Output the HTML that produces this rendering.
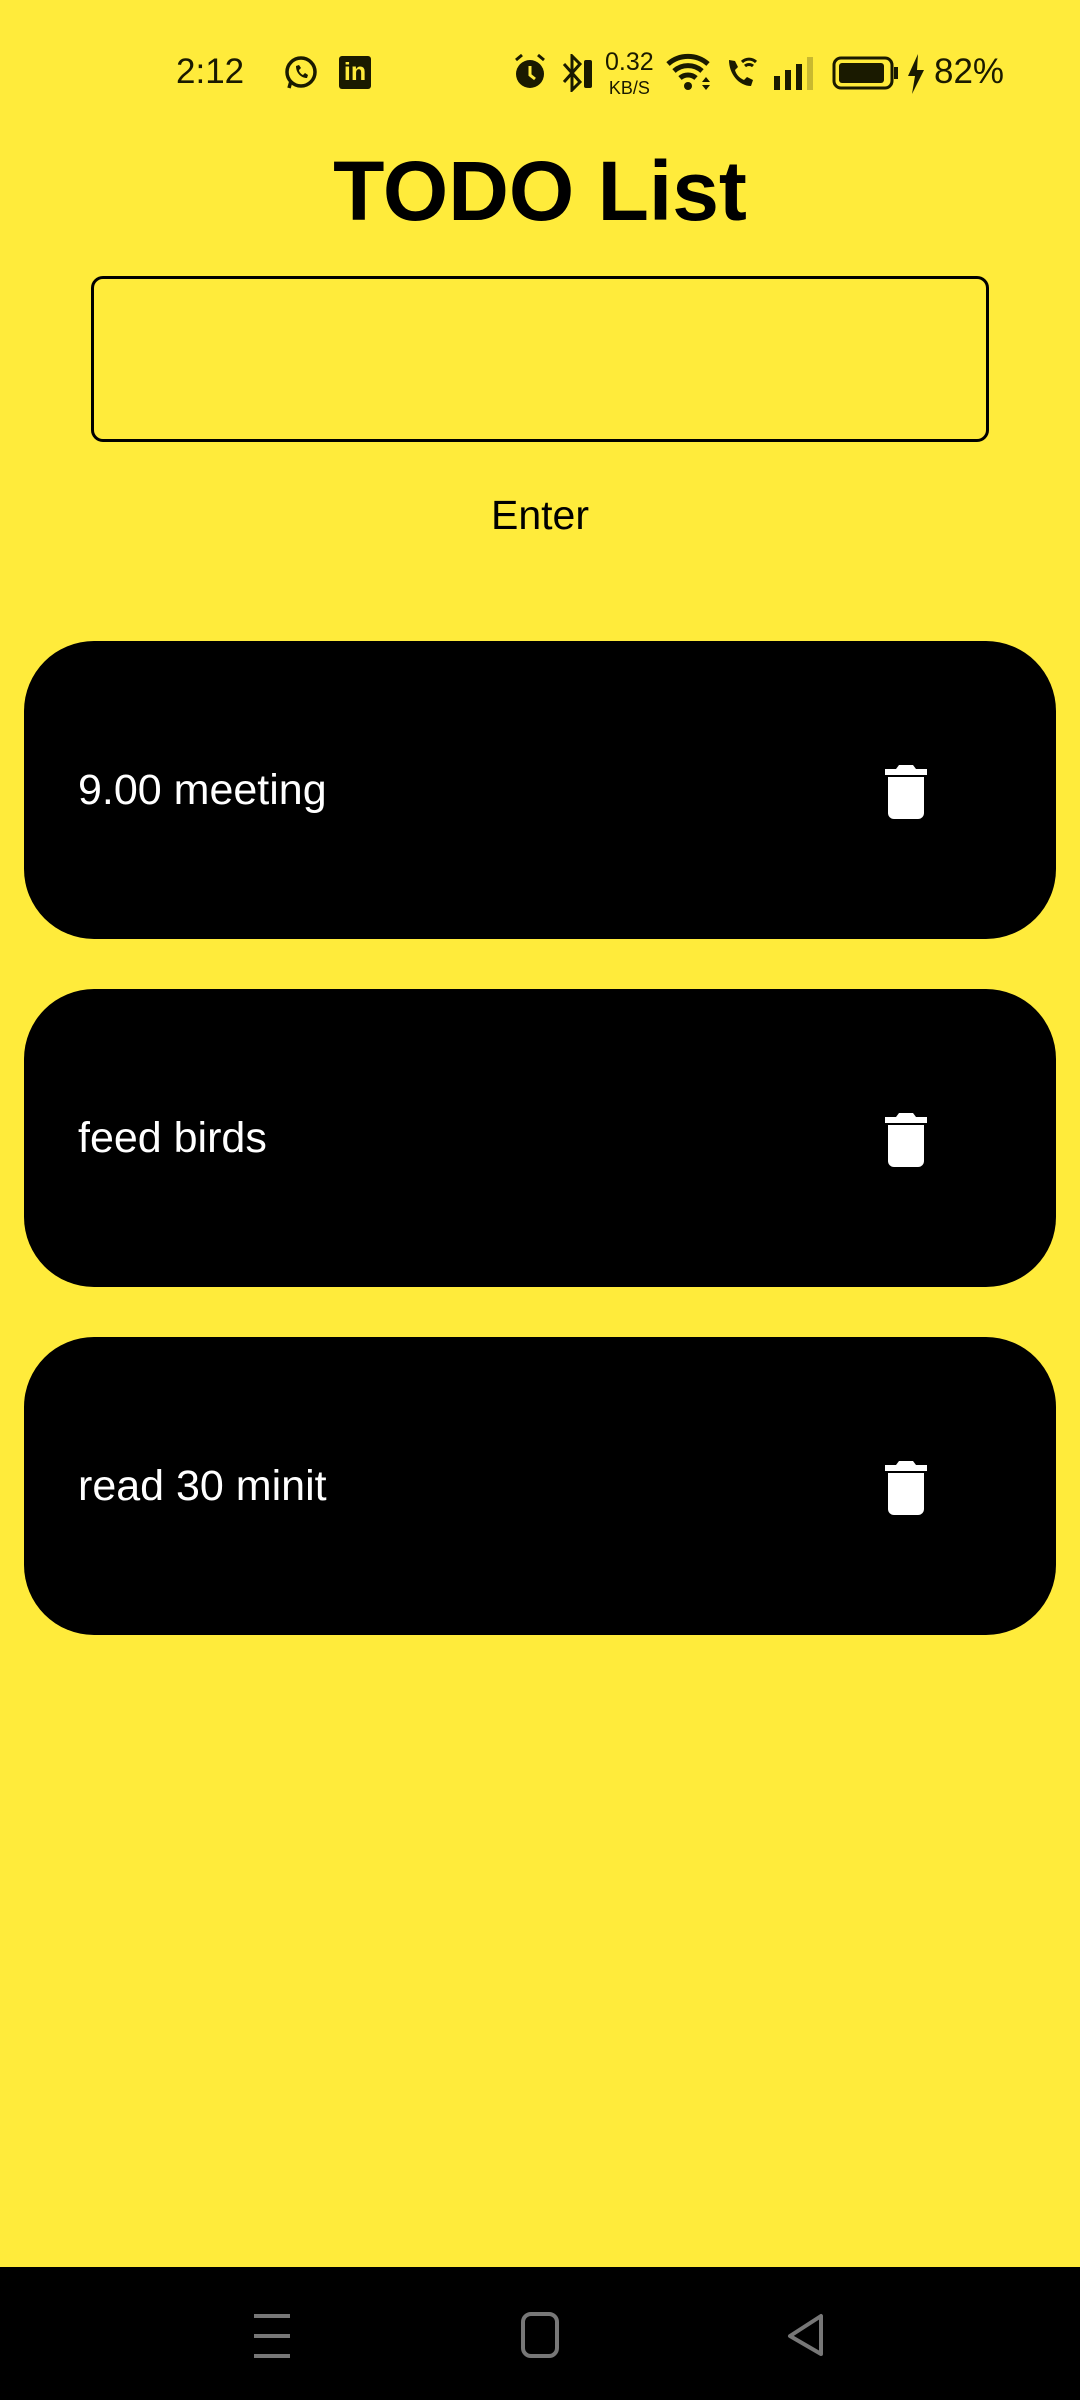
<!DOCTYPE html>
<html><head><meta charset="utf-8"><style>
*{margin:0;padding:0;box-sizing:border-box}
body{width:1080px;height:2400px;background:#FFEB3B;position:relative;overflow:hidden;font-family:"Liberation Sans",sans-serif;color:#000}
.abs{position:absolute}
.st{font-size:35px;color:#1a1a00;top:52px}
.title{left:0;width:1080px;text-align:center;top:136px;font-size:84px;font-weight:bold;line-height:110px}
.input{left:91px;top:276px;width:898px;height:166px;border:3px solid #000;border-radius:12px}
.enter{left:0;width:1080px;text-align:center;top:490px;font-size:41px;line-height:50px}
.card{left:24px;width:1032px;height:298px;background:#000;border-radius:70px}
.card span{position:absolute;left:54px;top:125px;font-size:43px;color:#fff;line-height:48px}
.card svg{position:absolute;left:861px;top:122px}
.nav{left:0;top:2267px;width:1080px;height:133px;background:#000}
</style></head><body>
<div class="abs st" style="left:176px">2:12</div>
<svg class="abs" style="left:283px;top:55px" width="36" height="36" viewBox="0 0 36 36"><circle cx="18" cy="17" r="14" fill="none" stroke="#1a1a00" stroke-width="3.5"/><path d="M6 33l2-7" stroke="#1a1a00" stroke-width="3.5"/><path d="M13 11c0 7 5 12 11 12l1-3-3-2-2 2c-2-1-4-3-4-5l2-2-2-3z" fill="#1a1a00"/></svg>
<div class="abs" style="left:339px;top:56px;width:32px;height:33px;background:#1a1a00;border-radius:3px;color:#FFEB3B;font-weight:bold;font-size:25px;line-height:33px;text-align:center">in</div>
<svg class="abs" style="left:512px;top:52px" width="36" height="40" viewBox="0 0 36 40"><circle cx="18" cy="22" r="14" fill="#1a1a00"/><path d="M18 14v9l5 4" stroke="#FFEB3B" stroke-width="3" fill="none"/><path d="M4 8l6-5M32 8l-6-5" stroke="#1a1a00" stroke-width="3"/></svg>
<svg class="abs" style="left:560px;top:54px" width="36" height="38" viewBox="0 0 36 38"><path d="M4 10l16 18-8 8V2l8 8L4 28" stroke="#1a1a00" stroke-width="3" fill="none"/><rect x="24" y="6" width="8" height="28" rx="2" fill="#1a1a00"/></svg>
<div class="abs" style="left:605px;top:50px;font-size:25px;line-height:24px;color:#1a1a00;text-align:center">0.32<br><span style="font-size:18px">KB/S</span></div>
<svg class="abs" style="left:664px;top:52px" width="48" height="40" viewBox="0 0 48 40"><path d="M4 12a30 30 0 0 1 40 0M10 19a21 21 0 0 1 28 0M16 26a12 12 0 0 1 16 0" stroke="#1a1a00" stroke-width="5" fill="none"/><circle cx="24" cy="34" r="4" fill="#1a1a00"/><path d="M38 30l4-5 4 5zM38 33l4 5 4-5z" fill="#1a1a00"/></svg>
<svg class="abs" style="left:724px;top:54px" width="36" height="36" viewBox="0 0 36 36"><path d="M5 6c0 14 10 26 22 26l2-6-6-3-3 3c-5-2-8-6-9-10l3-3-3-6z" fill="#1a1a00"/><path d="M18 8a10 10 0 0 1 14 0M21 12a6 6 0 0 1 8 0" stroke="#1a1a00" stroke-width="3" fill="none"/></svg>
<svg class="abs" style="left:772px;top:56px" width="46" height="34" viewBox="0 0 46 34"><rect x="2" y="20" width="6" height="14" fill="#1a1a00"/><rect x="13" y="14" width="6" height="20" fill="#1a1a00"/><rect x="24" y="8" width="6" height="26" fill="#1a1a00"/><rect x="35" y="1" width="6" height="33" fill="#c9b92f"/></svg>
<svg class="abs" style="left:832px;top:56px" width="68" height="34" viewBox="0 0 68 34"><rect x="2" y="2" width="58" height="30" rx="7" fill="none" stroke="#1a1a00" stroke-width="3"/><rect x="7" y="7" width="45" height="20" rx="3" fill="#1a1a00"/><rect x="62" y="11" width="4" height="12" fill="#1a1a00"/></svg>
<svg class="abs" style="left:906px;top:54px" width="20" height="40" viewBox="0 0 20 40"><path d="M12 0L2 22h7l-3 18 12-24h-7z" fill="#1a1a00"/></svg>
<div class="abs st" style="left:934px">82%</div>

<div class="abs title">TODO List</div>
<div class="abs input"></div>
<div class="abs enter">Enter</div>

<div class="abs card" style="top:641px"><span>9.00 meeting</span><svg width="42" height="56" viewBox="0 0 42 56"><path d="M14 2h14l3 4h11v6H0V6h11z" fill="#fff"/><path d="M3 14h36v36a6 6 0 0 1-6 6H9a6 6 0 0 1-6-6z" fill="#fff"/></svg></div>
<div class="abs card" style="top:989px"><span>feed birds</span><svg width="42" height="56" viewBox="0 0 42 56"><path d="M14 2h14l3 4h11v6H0V6h11z" fill="#fff"/><path d="M3 14h36v36a6 6 0 0 1-6 6H9a6 6 0 0 1-6-6z" fill="#fff"/></svg></div>
<div class="abs card" style="top:1337px"><span>read 30 minit</span><svg width="42" height="56" viewBox="0 0 42 56"><path d="M14 2h14l3 4h11v6H0V6h11z" fill="#fff"/><path d="M3 14h36v36a6 6 0 0 1-6 6H9a6 6 0 0 1-6-6z" fill="#fff"/></svg></div>

<div class="abs nav">
<svg class="abs" style="left:254px;top:46px" width="36" height="46" viewBox="0 0 36 46"><path d="M0 3h36M0 23h36M0 43h36" stroke="#777" stroke-width="4"/></svg>
<svg class="abs" style="left:521px;top:45px" width="38" height="46" viewBox="0 0 38 46"><rect x="2" y="2" width="34" height="42" rx="8" fill="none" stroke="#777" stroke-width="4"/></svg>
<svg class="abs" style="left:787px;top:45px" width="38" height="46" viewBox="0 0 38 46"><path d="M34 4v38L3 24z" fill="none" stroke="#777" stroke-width="4" stroke-linejoin="round"/></svg>
</div>
</body></html>
